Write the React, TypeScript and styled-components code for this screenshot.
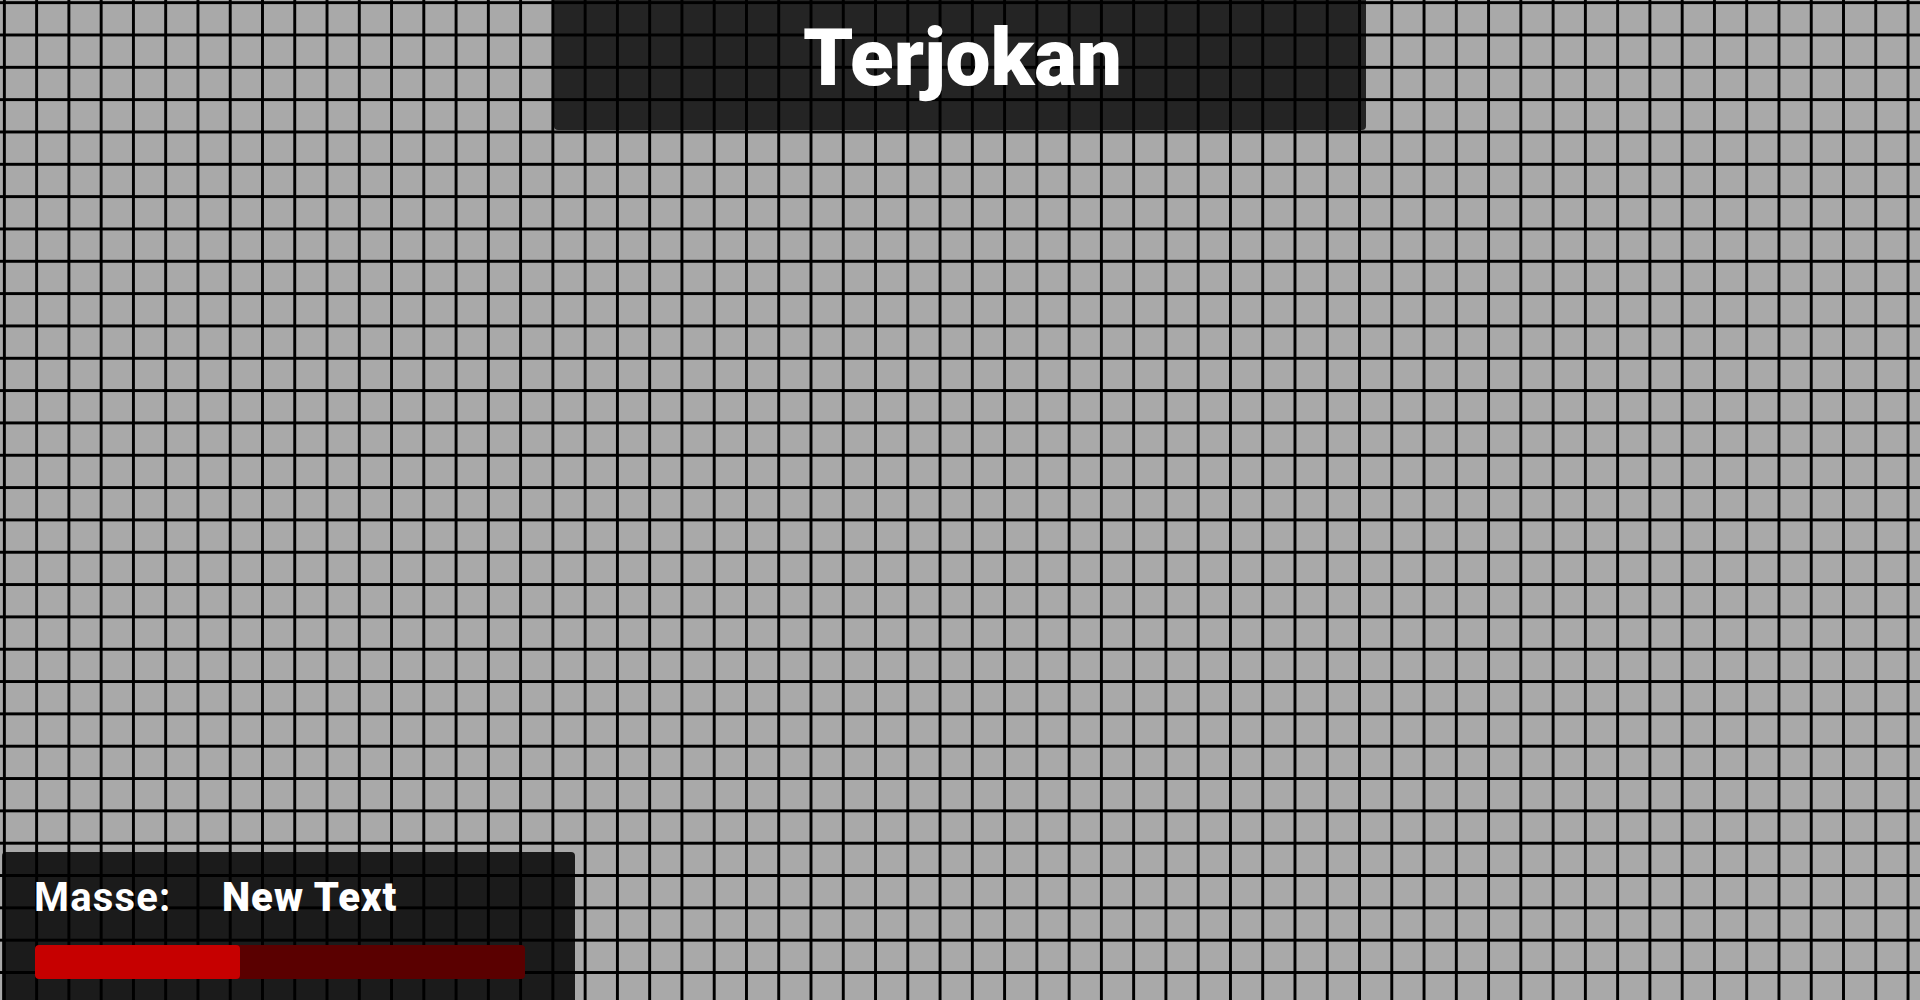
import styled, {createGlobalStyle} from "styled-components";

const GlobalStyle = createGlobalStyle`
  html, body {
    margin: 0;
    padding: 0;
    height: 100%;
    overflow: hidden;
  }

  body {
    font-family: Roboto, "Liberation Sans", sans-serif;
    color: #fff;
  }
`;

// grey canvas with a fine black grid, panels sit over it semi-transparent
const Screen = styled.div`
  height: 100vh;
  display: flex;
  flex-direction: column;
  justify-content: space-between;
  background-color: #a9a9a9;
  background-image:
    linear-gradient(90deg, #000 0 3px, transparent 3px),
    linear-gradient(180deg, #000 0 3px, transparent 3px);
  background-size: 32.28px 32.33px;
  background-position: 2.9px 1.2px;
`;

const TitleBar = styled.header`
  align-self: center;
  width: 812px;
  height: 130px;
  box-sizing: border-box;
  padding: 18px 0 0 5px;
  background: rgba(0, 0, 0, 0.79);
  border-radius: 0 0 4px 4px;
  text-align: center;
`;

const Title = styled.h1`
  margin: 0;
  font-size: 80px;
  line-height: 80px;
  font-weight: 900;
  color: #fff;
`;

const StatsPanel = styled.section`
  align-self: flex-start;
  margin-left: 2px;
  width: 573px;
  height: 148px;
  box-sizing: border-box;
  padding: 26px 0 0 32px;
  background: rgba(0, 0, 0, 0.845);
  border-radius: 4px 4px 0 0;
  display: flex;
  flex-direction: column;
  gap: 27px;
`;

const StatRow = styled.div`
  display: flex;
  align-items: baseline;
  font-size: 40px;
  line-height: 40px;
`;

const StatLabel = styled.span`
  width: 188px;
  font-weight: 700;
  letter-spacing: 1.2px;
`;

const StatValue = styled.span`
  font-weight: 900;
  letter-spacing: 1px;
`;

const Bar = styled.div`
  margin-left: 1px;
  width: 490px;
  height: 34px;
  border-radius: 4px;
  background: #5a0000;
  overflow: hidden;
`;

const BarFill = styled.div`
  height: 100%;
  background: #c60000;
  border-radius: 4px;
`;

const mass = 0.418;

export default function App() {
    return (
        <>
            <GlobalStyle/>
            <Screen>
                <TitleBar>
                    <Title>Terjokan</Title>
                </TitleBar>
                <StatsPanel>
                    <StatRow>
                        <StatLabel>Masse:</StatLabel>
                        <StatValue>New Text</StatValue>
                    </StatRow>
                    <Bar>
                        <BarFill style={{width: `${mass * 100}%`}}/>
                    </Bar>
                </StatsPanel>
            </Screen>
        </>
    );
}
